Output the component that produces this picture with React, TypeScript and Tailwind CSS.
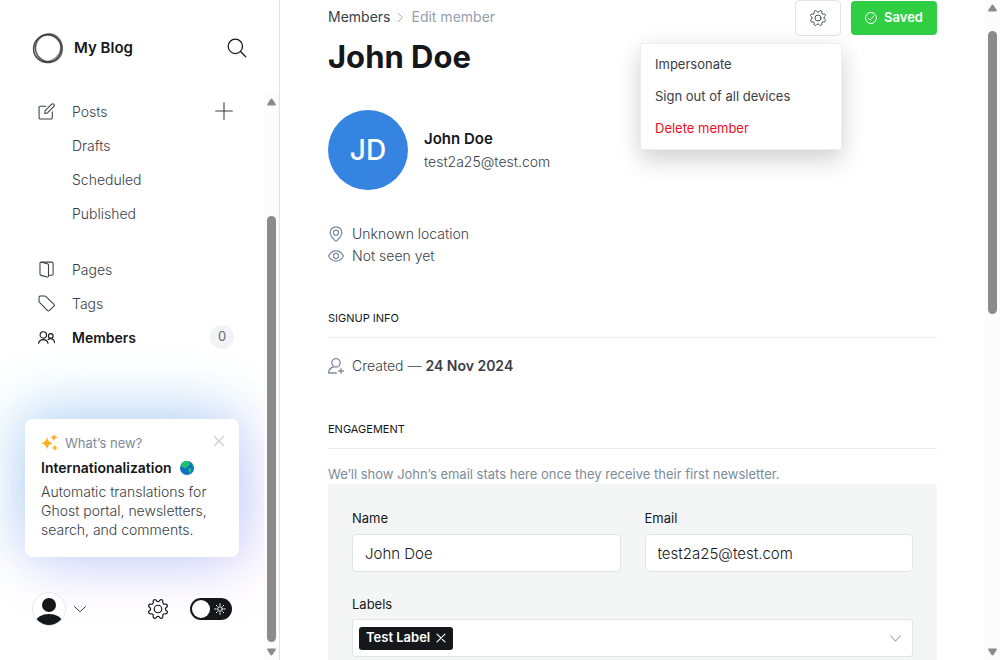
import type { ReactNode } from "react";

const COG =
  "M10.546 2.438a1.957 1.957 0 0 0 2.908 0L14.4 1.4a1.959 1.959 0 0 1 3.41 1.413l-.071 1.4a1.958 1.958 0 0 0 2.051 2.054l1.4-.071a1.959 1.959 0 0 1 1.41 3.41l-1.042.94a1.96 1.96 0 0 0 0 2.909l1.042.94a1.959 1.959 0 0 1-1.413 3.41l-1.4-.071a1.958 1.958 0 0 0-2.056 2.056l.071 1.4A1.959 1.959 0 0 1 14.4 22.6l-.941-1.041a1.959 1.959 0 0 0-2.908 0L9.606 22.6A1.959 1.959 0 0 1 6.2 21.192l.072-1.4a1.958 1.958 0 0 0-2.056-2.056l-1.4.071A1.958 1.958 0 0 1 1.4 14.4l1.041-.94a1.96 1.96 0 0 0 0-2.909L1.4 9.606A1.958 1.958 0 0 1 2.809 6.2l1.4.071a1.958 1.958 0 0 0 2.058-2.06L6.2 2.81A1.959 1.959 0 0 1 9.606 1.4z";

function Icon({ className, stroke = 1.5, children }: { className: string; stroke?: number; children: ReactNode }) {
  return (
    <svg
      viewBox="0 0 24 24"
      className={className}
      fill="none"
      stroke="currentColor"
      strokeWidth={stroke}
      strokeLinecap="round"
      strokeLinejoin="round"
      aria-hidden="true"
    >
      {children}
    </svg>
  );
}

function Cog({ className }: { className: string }) {
  return (
    <Icon className={className} stroke={1.4}>
      <path d={COG} />
      <circle cx="12" cy="12" r="4.5" />
    </Icon>
  );
}

function Logo() {
  return (
    <svg viewBox="0 0 32 32" className="size-8 shrink-0" fill="none" stroke="#333" aria-hidden="true">
      <circle cx="15.300" cy="16.700" r="13.800" strokeWidth="1.300" opacity=".75" />
      <ellipse cx="16.800" cy="15.600" rx="14" ry="13" strokeWidth="1.200" opacity=".55" transform="rotate(48 16 16)" />
      <ellipse cx="15.600" cy="15.300" rx="14.300" ry="13" strokeWidth="1.300" opacity=".55" transform="rotate(-48 16 16)" />
      <ellipse cx="16.800" cy="16.600" rx="13.400" ry="13.800" strokeWidth="2" opacity=".35" />
      <ellipse cx="16.500" cy="15.300" rx="13.200" ry="14" strokeWidth="1.200" opacity=".45" transform="rotate(24 16 16)" />
    </svg>
  );
}

function ScrollBar({ thumb }: { thumb: string }) {
  return (
    <div className="flex w-[15px] shrink-0 flex-col items-center bg-[#fcfcfc] py-1" aria-hidden="true">
      <svg viewBox="0 0 9 8" className="h-2 w-[9px] shrink-0" fill="#8b8b8b">
        <path d="M4.5.5c.5 0 .8.3 1 .7L8.700 6c.4.700 0 1.500-.8 1.500H1.100C.3 7.500-.1 6.700.3 6l3.200-4.800c.2-.4.5-.7 1-.7z" />
      </svg>
      <div className="flex w-full flex-1 flex-col items-center py-1">
        <div className={thumb} />
      </div>
      <svg viewBox="0 0 9 8" className="h-2 w-[9px] shrink-0" fill="#8b8b8b">
        <path d="M4.500 7.500c-.5 0-.8-.3-1-.7L.3 2C-.1 1.300.3.5 1.100.5h6.800c.8 0 1.200.8.8 1.500L5.500 6.800c-.2.4-.5.7-1 .7z" />
      </svg>
    </div>
  );
}

function NavLink({
  icon,
  active,
  action,
  children,
}: {
  icon?: ReactNode;
  active?: boolean;
  action?: ReactNode;
  children: ReactNode;
}) {
  return (
    <li className="flex h-[34px] items-center">
      <a
        href="#"
        className={
          active
            ? "flex flex-1 items-center text-[14px] font-semibold text-[#15171a]"
            : "flex flex-1 items-center text-[14px] font-[350] text-[#394047]"
        }
      >
        <span className="flex w-[34px] shrink-0 items-center">{icon}</span>
        {children}
      </a>
      {action}
    </li>
  );
}

function Sidebar() {
  return (
    <aside className="flex w-[280px] shrink-0 flex-col border-r border-[#dfe1e3] bg-white">
      <header className="flex h-[94px] shrink-0 items-center px-8 pt-[2px]">
        <Logo />
        <span className="ml-[10px] flex-1 text-[15px] font-semibold text-[#15171a]">My Blog</span>
        <button type="button" aria-label="Search" className="text-[#15171a]">
          <Icon className="size-5">
            <circle cx="10" cy="10" r="8.600" />
            <path d="M16.200 16.200 22.500 22.500" />
          </Icon>
        </button>
      </header>

      <div className="flex min-h-0 flex-1">
        <div className="flex min-w-0 flex-1 flex-col overflow-hidden">
          <nav className="pr-[30px] pl-[38px]">
            <ul>
              <NavLink
                icon={
                  <Icon className="size-[17px]">
                    <path d="M20.200 12.500v8.200a1.800 1.800 0 0 1-1.800 1.800H3.300a1.800 1.800 0 0 1-1.800-1.800V6.300a1.800 1.800 0 0 1 1.800-1.800h8" />
                    <path d="m13.300 14.100-3.900.7.700-3.900 9.300-9.200a1.800 1.800 0 0 1 2.600 0l.5.500a1.800 1.800 0 0 1 0 2.600z" />
                  </Icon>
                }
                action={
                  <button type="button" aria-label="New post" className="text-[#394047]">
                    <Icon className="size-5" stroke={1.3}>
                      <path d="M12 2v20M2 12h20" />
                    </Icon>
                  </button>
                }
              >
                Posts
              </NavLink>
              <NavLink>Drafts</NavLink>
              <NavLink>Scheduled</NavLink>
              <NavLink>Published</NavLink>
            </ul>
            <ul className="mt-[22px]">
              <NavLink
                icon={
                  <Icon className="size-[17px]">
                    <path d="M2.800 3.200a1.500 1.500 0 0 1 1.900-1.500l8.600 2.200a2 2 0 0 1 1.500 1.900v15.300a1.500 1.500 0 0 1-1.900 1.400l-8.600-2.200a2 2 0 0 1-1.500-1.900z" />
                    <path d="M4.200 1.600h15.300a1.800 1.800 0 0 1 1.800 1.800v14.900a1.800 1.800 0 0 1-1.800 1.800h-4.500" />
                  </Icon>
                }
              >
                Pages
              </NavLink>
              <NavLink
                icon={
                  <Icon className="size-[17px]">
                    <path d="M1.500 2.800v6a2.200 2.200 0 0 0 .7 1.600l11 11.400a2.200 2.200 0 0 0 3.100 0l5.900-5.900a2.200 2.200 0 0 0 0-3.100L11 2.100a2.200 2.200 0 0 0-1.600-.6H2.800a1.300 1.300 0 0 0-1.300 1.300z" />
                  </Icon>
                }
              >
                Tags
              </NavLink>
              <NavLink
                active
                icon={
                  <Icon className="size-[17px]" stroke={1.600}>
                    <circle cx="7.500" cy="8.300" r="4.500" />
                    <circle cx="18" cy="9.800" r="3.300" />
                    <path d="M.8 20.200a6.900 6.900 0 0 1 13.400 0M14.300 14.800a5.600 5.600 0 0 1 9 4.400" />
                  </Icon>
                }
                action={
                  <span className="flex size-6 items-center justify-center rounded-full bg-[#f1f3f4] text-[13px] text-[#626d79]">
                    0
                  </span>
                }
              >
                Members
              </NavLink>
            </ul>
          </nav>

          <section className="mx-[25px] mt-[65px] rounded-lg bg-white px-4 pt-[15px] pb-[18px] shadow-[-10px_-12px_60px_rgba(60,190,225,0.22),0_-6px_50px_rgba(60,110,240,0.14),10px_12px_60px_rgba(170,90,250,0.2)]">
            <div className="flex items-center">
              <svg viewBox="0 0 24 24" className="size-[17px] shrink-0" fill="#fdb022" aria-hidden="true">
                <path d="M8.500 4c1.200 5.500 2.700 7.500 8.500 9-5.800 1.500-7.300 3.500-8.500 9-1.200-5.500-2.700-7.500-8.500-9 5.800-1.500 7.300-3.500 8.500-9zM18.300 0c.9 3 1.900 4.100 5.500 5-3.600.9-4.600 2-5.500 5-.9-3-1.900-4.100-5.500-5 3.600-.9 4.600-2 5.500-5zM19.500 15.200c.7 2.600 1.500 3.600 4.500 4.400-3 .8-3.800 1.800-4.500 4.400-.7-2.600-1.500-3.600-4.500-4.400 3-.8 3.800-1.800 4.500-4.400z" />
              </svg>
              <span className="ml-[7px] flex-1 text-[13px] leading-4 text-[#7c8b9a]">What’s new?</span>
              <button type="button" aria-label="Dismiss" className="-mt-1 -mr-[2px] text-[#cfd3d7]">
                <Icon className="size-3" stroke={3}>
                  <path d="m3 3 18 18M21 3 3 21" />
                </Icon>
              </button>
            </div>
            <h2 className="mt-[7px] flex items-center gap-2 text-[14px] leading-5 font-semibold text-[#15171a]">
              Internationalization
              <svg viewBox="0 0 16 16" className="size-[14px]" aria-hidden="true">
                <circle cx="8" cy="8" r="8" fill="#0b6fc2" />
                <path
                  d="M.8 4.600A8 8 0 0 1 8.500 0l2 .6-.6 1.700 1.800.3-.3 2-2 .3.600 1.500-2.400.4-1.300 2-1.700-.6-.6-1.400-1.800.4zM9.500 8.400l2.200-.4 1.500 1.600-.3 2.200-1.600 2.600-1.300-2.200zM13 4l1.800-.3 1.100 3-1.600-.4z"
                  fill="#1fc36b"
                />
              </svg>
            </h2>
            <p className="mt-1 text-[14px] leading-[19px] font-[350] text-[#394047]">
              Automatic translations for Ghost portal, newsletters, search, and comments.
            </p>
          </section>

          <div className="mt-[35px] flex items-center px-8">
            <button type="button" aria-label="Account" className="flex items-center gap-2 text-[#394047]">
              <svg viewBox="0 0 34 34" className="size-[34px]" aria-hidden="true">
                <clipPath id="avatar">
                  <circle cx="17" cy="17" r="16" />
                </clipPath>
                <circle cx="17" cy="17" r="16.500" fill="#fff" stroke="#e6e9eb" />
                <circle cx="17" cy="13" r="7" fill="#15171a" />
                <ellipse cx="17" cy="30" rx="13" ry="8" fill="#15171a" clipPath="url(#avatar)" />
              </svg>
              <Icon className="size-3" stroke={2}>
                <path d="m1 7 11 10.500L23 7" />
              </Icon>
            </button>
            <button type="button" aria-label="Settings" className="ml-auto text-[#15171a]">
              <Cog className="size-5" />
            </button>
            <label className="ml-[22px] flex h-[22px] w-[42px] items-center justify-between rounded-full bg-[#15171a] pr-[6px] pl-[2px]">
              <input type="checkbox" aria-label="Dark mode" className="size-[18px] appearance-none rounded-full bg-white" />
              <Icon className="size-3 text-white" stroke={2}>
                <circle cx="12" cy="12" r="4.500" />
                <path d="M12 1.500v3M12 19.500v3M1.500 12h3M19.500 12h3M4.600 4.600l2 2M17.400 17.400l2 2M4.600 19.400l2-2M17.400 6.600l2-2" />
              </Icon>
            </label>
          </div>
        </div>
        <ScrollBar thumb="mt-[106px] mb-[2px] w-[9px] flex-1 rounded-full bg-[#8b8b8b]" />
      </div>
    </aside>
  );
}

function SectionTitle({ children }: { children: ReactNode }) {
  return (
    <h3 className="border-b border-[#ebeef0] pb-[11px] text-[11px] leading-4 text-[#15171a] uppercase">{children}</h3>
  );
}

function Field({ id, label, type, value }: { id: string; label: string; type: string; value: string }) {
  return (
    <div className="min-w-0 flex-1">
      <label htmlFor={id} className="block text-[13px] leading-4 text-[#15171a]">
        {label}
      </label>
      <input
        id={id}
        type={type}
        defaultValue={value}
        className="mt-2 h-[38px] w-full rounded border border-[#e2e5e7] bg-white px-3 text-[15px] font-[350] text-[#15171a]"
      />
    </div>
  );
}

export default function App() {
  return (
    <div className="flex h-screen overflow-hidden bg-white font-['Inter','Liberation_Sans',sans-serif] text-[#394047]">
      <Sidebar />

      <main className="min-w-0 flex-1 overflow-hidden px-12">
        <div className="flex items-start">
          <div className="flex-1 pt-2">
            <div className="flex items-center text-[14px] leading-[18px]">
              <a href="#" className="text-[#394047]">
                Members
              </a>
              <Icon className="mx-[6px] size-[9px] text-[#95a1ad]" stroke={2.500}>
                <path d="m6 1 11 11L6 23" />
              </Icon>
              <span className="text-[#95a1ad]">Edit member</span>
            </div>
            <h1 className="mt-[13px] text-[31px] leading-9 font-bold text-[#15171a]">John Doe</h1>
          </div>
          <div className="flex gap-[10px]">
            <div className="relative">
              <button
                type="button"
                aria-label="Member actions"
                aria-expanded="true"
                className="flex h-9 w-[46px] items-center justify-center rounded border border-[#e2e5e7] bg-white text-[#394047]"
              >
                <Cog className="size-4" />
              </button>
              <ul className="absolute top-[43px] -right-px w-[202px] rounded-[3px] border border-[#ebeef0] bg-white pt-[5px] pb-1 text-[13px] shadow-[0_12px_24px_rgba(0,0,0,0.14),0_2px_24px_rgba(0,0,0,0.06)]">
                <li>
                  <button type="button" className="h-8 w-full px-[14px] text-left text-[#394047]">
                    Impersonate
                  </button>
                </li>
                <li>
                  <button type="button" className="h-8 w-full px-[14px] text-left text-[#394047]">
                    Sign out of all devices
                  </button>
                </li>
                <li>
                  <button type="button" className="h-8 w-full px-[14px] text-left text-[#f50b23]">
                    Delete member
                  </button>
                </li>
              </ul>
            </div>
            <button
              type="button"
              className="mt-px flex h-[34px] w-[86px] items-center justify-center gap-[7px] rounded bg-[#30cf43] text-[13px] font-semibold text-white"
            >
              <Icon className="size-3" stroke={2}>
                <circle cx="12" cy="12" r="11" />
                <path d="m6.500 12.500 3.800 3.800 7-8.300" />
              </Icon>
              Saved
            </button>
          </div>
        </div>

        <div className="mt-[35px] flex items-center gap-4">
          <div className="flex size-20 shrink-0 items-center justify-center rounded-full bg-[#3684e1] text-[28px] font-medium text-white">
            JD
          </div>
          <div>
            <h2 className="text-[15px] leading-6 font-semibold text-[#15171a]">John Doe</h2>
            <p className="text-[14px] leading-[22px] font-[350]">test2a25@test.com</p>
          </div>
        </div>

        <div className="mt-[33px] text-[14px] leading-[22px] font-[350]">
          <p className="flex items-center gap-2">
            <Icon className="size-4 text-[#7c8b9a]" stroke={1.8}>
              <path d="M12 1.200a8.800 8.800 0 0 1 8.800 8.800c0 4.300-6.300 10.800-8.200 12.600a.9.900 0 0 1-1.200 0C9.500 20.800 3.200 14.300 3.200 10A8.800 8.800 0 0 1 12 1.200z" />
              <circle cx="12" cy="10" r="3.800" />
            </Icon>
            Unknown location
          </p>
          <p className="flex items-center gap-2">
            <Icon className="size-4 text-[#7c8b9a]" stroke={1.8}>
              <path d="M23.200 12c-2.500 4.700-6.500 7.700-11.200 7.700S3.300 16.700.8 12C3.300 7.300 7.300 4.300 12 4.300s8.700 3 11.200 7.700z" />
              <circle cx="12" cy="12" r="3.800" />
            </Icon>
            Not seen yet
          </p>
        </div>

        <div className="mt-[43px]">
          <SectionTitle>Signup info</SectionTitle>
          <p className="mt-[17px] flex items-center text-[14px] leading-[22px] font-[350]">
            <Icon className="mr-2 size-4 text-[#7c8b9a]" stroke={2}>
              <circle cx="12" cy="7.300" r="6.300" />
              <path d="M8 13.500C3.500 15 1 18.500 1 22.500h11.500M19.500 16v7M16 19.500h7" />
            </Icon>
            Created —&nbsp;<strong className="font-semibold">24 Nov 2024</strong>
          </p>
        </div>

        <div className="mt-11">
          <SectionTitle>Engagement</SectionTitle>
          <p className="mt-4 pb-px text-[13px] leading-[18px] text-[#7c8b9a]">
            We’ll show John’s email stats here once they receive their first newsletter.
          </p>
        </div>

        <form className="rounded-[3px] bg-[#f4f6f6] px-6 pt-[26px] pb-12">
          <div className="flex gap-6">
            <Field id="name" label="Name" type="text" value="John Doe" />
            <Field id="email" label="Email" type="email" value="test2a25@test.com" />
          </div>
          <div className="mt-6">
            <label htmlFor="labels" className="block text-[13px] leading-4 text-[#15171a]">
              Labels
            </label>
            <div className="mt-[7px] flex h-[38px] items-center rounded-[3px] border border-[#e2e5e7] bg-white pr-[11px] pl-[6px]">
              <span className="flex h-[23px] items-center gap-[6px] rounded-[3px] bg-[#15171a] px-[7px] text-[13px] font-semibold text-white">
                Test Label
                <button type="button" aria-label="Remove Test Label">
                  <Icon className="size-[10px]" stroke={2.800}>
                    <path d="m2.500 2.500 19 19M21.500 2.500l-19 19" />
                  </Icon>
                </button>
              </span>
              <input id="labels" type="text" className="h-full min-w-0 flex-1 bg-transparent px-2 text-[13px] outline-none" />
              <Icon className="size-[11px] text-[#abb4be]" stroke={2.500}>
                <path d="m1.500 6.500 10.500 11 10.500-11" />
              </Icon>
            </div>
          </div>
        </form>
      </main>

      <ScrollBar thumb="mt-[15px] h-[283px] w-[9px] rounded-full bg-[#8b8b8b]" />
    </div>
  );
}
